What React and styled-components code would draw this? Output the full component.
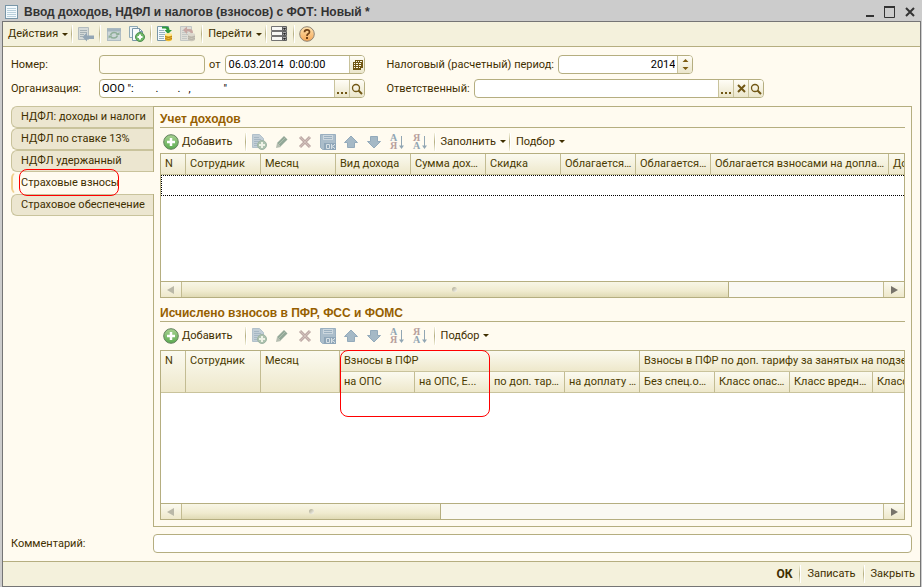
import React from 'react';
import styled, { createGlobalStyle, css } from 'styled-components';

const GlobalStyle = createGlobalStyle`
  * {
    box-sizing: border-box;
  }
  body {
    margin: 0;
    background: #cccccc;
  }
  body, button, input {
    color: #3f2f00;
    font-family: Roboto, "Liberation Sans", sans-serif;
    font-size: 11px;
    line-height: 16px;
  }
`;

// window
const Window = styled.div`
  display: flex;
  flex-direction: column;
  min-height: 100vh;
  padding: 0 1px 0 2px;
`;

const TitleBar = styled.header`
  display: flex;
  align-items: center;
  gap: 4px;
  height: 21px;
  padding: 2px 5px 0 2px;
`;

const WindowTitle = styled.h1`
  flex: 1;
  margin: 0;
  color: #333333;
  font-size: 12px;
  font-family: "Liberation Sans", sans-serif;
  font-weight: bold;
`;

const WindowButtons = styled.div`
  display: flex;
  gap: 8px;
`;

const PlainButton = styled.button`
  display: flex;
  align-items: center;
  justify-content: center;
  padding: 0;
  border: none;
  background: none;
`;

const Frame = styled.main`
  display: flex;
  flex: 1;
  flex-direction: column;
  border: 1px solid #757575;
  background: #fffbf0;
`;

// toolbars
const MainToolbar = styled.div`
  display: flex;
  align-items: center;
  height: 25px;
  padding-left: 1px;
  border-bottom: 1px solid #b5ae80;
  background: #f4f1dc;
`;

const Toolbar = styled.div`
  display: flex;
  align-items: center;
  height: 25px;
  padding: 2px 0 0 3px;
  ${props => props.$loose && css`margin-bottom: 3px;`}
`;

const IconButton = styled(PlainButton)`
  width: 23px;
  height: 20px;
`;

const TextButton = styled(PlainButton)`
  gap: 4px;
  height: 20px;
  padding: 0 1px 0 4px;
  white-space: nowrap;
`;

const AddButton = styled(TextButton)`
  gap: 3px;
  margin-right: 10px;
  padding: 0;
`;

const Caret = styled.span`
  border: 3px solid transparent;
  border-top-color: #3f2f00;
  border-bottom: none;
`;

const Separator = styled.span`
  width: 2px;
  height: 18px;
  margin: 0 1px 0 2px;
  border-right: 1px solid #ffffff;
  background: linear-gradient(#f4f1dc, #b5ae80, #f4f1dc);
`;

// header fields
const Form = styled.div`
  display: flex;
  gap: 21px;
  padding: 8px;
`;

const FormColumn = styled.div`
  display: flex;
  flex-direction: column;
  gap: 5px;
  ${props => props.$wide && css`width: 378px;`}
`;

const FormRow = styled.div`
  display: flex;
  align-items: center;
`;

const Label = styled.label`
  flex-shrink: 0;
  width: ${props => props.$width || 88}px;
  white-space: nowrap;
`;

const Middle = styled.label`
  padding: 0 5px 0 4px;
`;

const Field = styled.div`
  display: flex;
  flex: ${props => (props.$width ? 'none' : 1)};
  width: ${props => (props.$width ? `${props.$width}px` : 'auto')};
  height: 19px;
  overflow: hidden;
  border: 1px solid #b5ae80;
  border-radius: 4px;
  background: ${props => (props.$muted ? '#fffbf0' : '#ffffff')};
`;

const Input = styled.input`
  flex: 1;
  width: 0;
  min-width: 0;
  padding: 0 2px;
  border: none;
  outline: none;
  background: transparent;
  color: #000000;
  text-align: ${props => props.$align || 'left'};
`;

const FieldButton = styled(PlainButton)`
  width: 15px;
  border-left: 1px solid #c9c39c;
  background: linear-gradient(#fffdf6, #ebe6cb);
`;

// pages
const Pages = styled.div`
  display: flex;
  flex: 1;
  padding: 0 8px;
`;

const Tabs = styled.nav`
  width: 142px;
`;

const Tab = styled.button`
  position: relative;
  display: block;
  width: 142px;
  height: 22px;
  padding: 0 0 0 9px;
  border: 1px solid #c9c39c;
  border-right: none;
  border-radius: 6px 0 0 6px;
  background: #ece6d0;
  text-align: left;
  white-space: nowrap;
  ${props => props.$active && css`
    z-index: 1;
    width: 143px;
    border-color: transparent;
    border-left: 2px solid #f0cf8c;
    padding-left: 8px;
    background: #fffbf0;
  `}
`;

const Panel = styled.section`
  display: flex;
  flex: 1;
  flex-direction: column;
  gap: 8px;
  min-width: 0;
  padding: 5px 6px 6px;
  border: 1px solid #b5ae80;
`;

const Group = styled.section`
  display: flex;
  flex: ${props => (props.$grow ? 1 : 'none')};
  flex-direction: column;
`;

const GroupTitle = styled.h2`
  margin: 0;
  border-bottom: 1px solid #b5ae80;
  color: #965f00;
  font-size: 12px;
  font-family: "Liberation Sans", sans-serif;
  font-weight: bold;
  line-height: 15px;
`;

const Grid = styled.div`
  position: relative;
  display: flex;
  flex: 1;
  flex-direction: column;
  border: 1px solid #b5ae80;
  background: #ffffff;
`;

const GridBody = styled.div`
  flex: 1;
  min-height: 127px;
  overflow: hidden;
`;

const Table = styled.table`
  width: ${props => props.$width}px;
  border-collapse: separate;
  border-spacing: 0;
  table-layout: fixed;
`;

const HeadCell = styled.th`
  height: 21px;
  padding: 2px 2px 2px 4px;
  overflow: hidden;
  border-right: 1px solid #c3bc92;
  border-bottom: 1px solid #c9c39c;
  background: linear-gradient(#fbfaf0, #eee8cb);
  color: #4b3b00;
  font-weight: normal;
  text-align: left;
  text-overflow: ellipsis;
  vertical-align: top;
  white-space: nowrap;
`;

const CurrentCell = styled.td`
  height: 21px;
  padding: 0;
  border: 1px dotted #000000;
  border-right: none;
`;

const ScrollBar = styled.div`
  display: flex;
  height: 16px;
  border-top: 1px solid #b5ae80;
  background: #faf9f3;
`;

const ScrollButton = styled(PlainButton)`
  width: 21px;
  border-${props => props.$side}: 1px solid #c3bc92;
  background: linear-gradient(#fbfaf0, #eee8cb);
`;

const ScrollTrack = styled.div`
  flex: 1;
`;

const ScrollThumb = styled.div`
  display: flex;
  align-items: center;
  justify-content: center;
  width: ${props => props.$size}%;
  height: 15px;
  border-right: 1px solid #b5ae80;
  background: linear-gradient(#f8f6e6, #f0ebcf 60%, #e0dab4);
`;

const Grip = styled.span`
  width: 5px;
  height: 5px;
  border-radius: 3px;
  background: linear-gradient(135deg, #aaa68c, #faf9f3);
`;

const RedMark = styled.span`
  position: absolute;
  top: ${props => props.$top}px;
  left: ${props => props.$left}px;
  width: ${props => props.$width}px;
  height: ${props => props.$height}px;
  border: 1px solid #ff0000;
  border-radius: 8px;
  pointer-events: none;
`;

const CommentRow = styled.div`
  display: flex;
  align-items: center;
  padding: 7px 8px 8px;
`;

const Footer = styled.footer`
  display: flex;
  align-items: center;
  justify-content: flex-end;
  height: 25px;
  border-top: 1px solid #b5ae80;
  background: #f4f1dc;
`;

const FooterButton = styled(TextButton)`
  padding: 0 5px;
  ${props => props.$primary && css`
    font-size: 12px;
    font-weight: bold;
  `}
`;

// icons
const Svg = ({ w = 16, h = 16, children }) => (
  <svg width={w} height={h} viewBox={`0 0 ${w} ${h}`} aria-hidden="true">{children}</svg>
);

const DocumentIcon = () => (
  <Svg>
    <rect x="1.5" y="1.5" width="12" height="13" fill="#f4fafd" stroke="#7896a8" />
    <path d="M3 4.5h9M3 6.5h9M3 8.5h9M3 10.5h9M3 12.5h9" stroke="#b9d0dc" />
  </Svg>
);

const MoveIcon = () => (
  <Svg>
    <path d="M.5 1.5h10v12H.5z" fill="#d5dad8" stroke="#b3bcbe" />
    <path d="M2 4.5h7M2 6.5h7M2 8.5h4M2 10.5h3" stroke="#a5b0b4" />
    <path d="M4.5 11L9 6.5v3h7V13H9v2.5z" fill="#93a6b5" />
  </Svg>
);

const RefreshIcon = () => (
  <Svg>
    <rect x="1.5" y="2.5" width="13" height="12" fill="#ccd6d8" stroke="#b0bdc3" />
    <path d="M1 4h14" stroke="#a4b4bd" strokeWidth="3" />
    <path d="M4.5 9q1-2.5 3.5-2.5T11.5 8M11.5 9.5q-1 2.5-3.5 2.5T4.5 10.5" fill="none" stroke="#8fae98" strokeWidth="1.5" />
    <path d="M9.5 9h4V6zM6.5 9.5h-4v3z" fill="#8fae98" />
  </Svg>
);

const CopyIcon = () => (
  <Svg>
    <path d="M.5.5h8v11h-8z" fill="#eef4f5" stroke="#8ea9b5" />
    <path d="M3.5 2.5h7l3 3v9h-10z" fill="#f8fbfb" stroke="#7896a8" />
    <path d="M10.5 2.5v3h3" fill="none" stroke="#7896a8" />
    <circle cx="11" cy="11" r="4.5" fill="#6fb866" stroke="#4f8d50" />
    <path d="M11 8.5v5M8.5 11h5" stroke="#ffffff" strokeWidth="2" />
  </Svg>
);

const PostIcon = ({ muted }) => (
  <Svg>
    <g opacity={muted ? 0.75 : 1}>
      <path d="M.5.5h11v14H.5z" fill={muted ? '#d8d8d6' : '#f4fafd'} stroke={muted ? '#b3b9bd' : '#7896a8'} />
      <path d="M2 4.5h5M2 6.5h6M2 8.5h6M2 10.5h5M2 12.5h5" stroke={muted ? '#b3b9bd' : '#9ab3c0'} />
      {muted
        ? <path d="M3 4l4-3.5V3h3q3 0 3 4h-2.5q0-1.5-1.5-1.5H7V8z" fill="#b88f8f" />
        : <path d="M5 .5h4Q12.500.5 12.500 4H15l-4 4-3.500-4h2q0-1.500-1-1.500H5z" fill="#2f9a3d" />}
      <path d="M8 8.5V14q3.500 2.500 7 0V8.500z" fill={muted ? '#bdb8ae' : '#f0bd32'} />
      <ellipse cx="11.5" cy="8.5" rx="3.5" ry="1.5" fill={muted ? '#d4d0c8' : '#ffe78a'} />
      <path d="M8 10.5q3.500 2 7 0M8 12.5q3.500 2 7 0" fill="none" stroke={muted ? '#9d9a93' : '#b57b14'} />
    </g>
  </Svg>
);

const ListIcon = () => (
  <Svg>
    {[0, 5, 10].map(y => (
      <g key={y}>
        <path d={`M.5 ${y + 0.5}h11v4H.5z`} fill="#f7f7f4" stroke="#737373" />
        <path d={`M11.5 ${y + 0.5}h4v4h-4z`} fill="#a5a5a5" stroke="#606060" />
        <path d={`M12 ${y + 2}h3l-1.5 2z`} fill="#222222" />
      </g>
    ))}
  </Svg>
);

const HelpIcon = () => (
  <Svg>
    <defs>
      <linearGradient id="help" x2="0" y2="1">
        <stop stopColor="#ffe4b0" />
        <stop offset="1" stopColor="#f5a655" />
      </linearGradient>
    </defs>
    <circle cx="8" cy="8" r="7.3" fill="url(#help)" stroke="#8f8475" />
    <path d="M5.5 6.2q0-2.4 2.5-2.4t2.5 2.2Q10.5 7.3 9 8.1q-1 .6-1 1.9" fill="none" stroke="#714116" strokeWidth="1.7" />
    <rect x="7" y="11" width="2" height="2" fill="#714116" />
  </Svg>
);

const AddIcon = () => (
  <Svg>
    <defs>
      <linearGradient id="add" x2="0" y2="1">
        <stop stopColor="#a8d292" />
        <stop offset="1" stopColor="#5bab50" />
      </linearGradient>
    </defs>
    <circle cx="8" cy="8" r="7.3" fill="url(#add)" stroke="#63805e" />
    <path d="M8 4v8M4 8h8" stroke="#ffffff" strokeWidth="2.5" />
  </Svg>
);

const AddCopyIcon = () => (
  <Svg>
    <path d="M1.5.5h7l4 4v9h-11z" fill="#c2ced6" stroke="#b2c1cb" />
    <path d="M3 3.5h5M3 5.5h7M3 7.5h5M3 9.5h3M3 11.500h3" stroke="#a6b7c3" />
    <circle cx="11" cy="11" r="4.5" fill="#acc2ae" stroke="#9eb3a3" />
    <path d="M11 8v6M8 11h6" stroke="#eef2e6" strokeWidth="2" />
  </Svg>
);

const PencilIcon = () => (
  <Svg>
    <path d="M2 14l1-5 4 4z" fill="#b5bdb0" />
    <path d="M3 9l7-7 3.500 3.500-7 7z" fill="#93a898" />
    <path d="M5 10l6-6" stroke="#afc0af" />
  </Svg>
);

const DeleteIcon = () => (
  <Svg>
    <path d="M3 3l10 10M13 3L3 13" stroke="#beaaa6" strokeWidth="3" />
    <path d="M3 3l10 10M13 3L3 13" stroke="#d0bfba" />
  </Svg>
);

const SaveIcon = () => (
  <Svg>
    <path d="M.5.5h15v15H2.5l-2-2z" fill="#abbdca" stroke="#9bb0c0" />
    <rect x="3" y="1" width="10" height="5" fill="#ccd7de" />
    <path d="M4 2.5h8M4 4.5h8" stroke="#9bb0c0" />
    <rect x="4" y="9" width="12" height="7" fill="#8fa6b8" />
    <path d="M6.5 10.5h3v4h-3zM11.5 10v5M14.5 10v1l-3 1.5 3 1.5v1" fill="none" stroke="#d7e0e5" />
  </Svg>
);

const ArrowIcon = ({ down }) => (
  <Svg>
    <path
      d="M8 2l6.500 6.500h-3v5h-7v-5h-3z"
      fill="#a5b9c6"
      stroke="#93aabb"
      transform={down ? 'rotate(180 8 8)' : undefined}
    />
  </Svg>
);

const SortButton = styled(IconButton)`
  gap: 2px;
`;

const SortLetters = styled.span`
  display: flex;
  flex-direction: column;
  color: ${props => props.$color};
  font-size: 10px;
  font-family: "Liberation Serif", serif;
  font-weight: bold;
  line-height: 8px;
`;

const SortSecond = styled.span`
  color: ${props => props.$color};
`;

const SortIcon = ({ desc }) => (
  <>
    <SortLetters $color={desc ? '#b8a09d' : '#91a6b3'}>
      {desc ? 'Я' : 'А'}
      <SortSecond $color={desc ? '#91a6b3' : '#b8a09d'}>{desc ? 'А' : 'Я'}</SortSecond>
    </SortLetters>
    <Svg w={5} h={16}>
      <path d="M2.5 2v11" stroke="#91a6b3" />
      <path d="M0 11.500h5l-2.500 3.500z" fill="#91a6b3" />
    </Svg>
  </>
);

const CalendarIcon = () => (
  <Svg w={11} h={12}>
    <path d="M3 1h8v8H9v2H1V3h2z" fill="#715715" />
    <path d="M4 2h1v1H4zM6 2h1v1H6zM8 2h2v1H8zM2 4h1v1H2zM4 4h2v1H4zM7 4h2v1H7zM2 6h1v1H2zM4 6h2v1H4zM7 6h2v1H7zM2 8h1v1H2zM4 8h2v1H4zM7 8h1v1H7z" fill="#fffbe8" />
  </Svg>
);

const DotsIcon = () => (
  <Svg w={11} h={12}>
    <path d="M0 9h2v2H0zM4 9h2v2H4zM8 9h2v2H8z" fill="#715715" />
  </Svg>
);

const ClearIcon = () => (
  <Svg w={9} h={9}>
    <path d="M1 1l7 7M8 1L1 8" stroke="#715715" strokeWidth="2" />
  </Svg>
);

const SearchIcon = () => (
  <Svg w={12} h={12}>
    <circle cx="5" cy="5" r="3.5" fill="none" stroke="#715715" strokeWidth="1.3" />
    <path d="M7.5 7.5L11 11" stroke="#715715" strokeWidth="2" />
  </Svg>
);

const SpinIcon = () => (
  <Svg w={7} h={13}>
    <path d="M3.5 1l3 3h-6zM3.5 12l3-3h-6z" fill="#7d5c10" />
  </Svg>
);

const TriangleIcon = ({ right }) => (
  <Svg w={8} h={8}>
    <path d={right ? 'M1 0l7 4-7 4z' : 'M7 0L0 4l7 4z'} fill={right ? '#77736a' : '#bab8a8'} />
  </Svg>
);

const tabs = [
  'НДФЛ: доходы и налоги',
  'НДФЛ по ставке 13%',
  'НДФЛ удержанный',
  'Страховые взносы',
  'Страховое обеспечение',
];

const incomeColumns = [
  { title: 'N', width: 25 },
  { title: 'Сотрудник', width: 75 },
  { title: 'Месяц', width: 75 },
  { title: 'Вид дохода', width: 75 },
  { title: 'Сумма дохода', width: 75 },
  { title: 'Скидка', width: 75 },
  { title: 'Облагается взносами', width: 75 },
  { title: 'Облагается взносами', width: 75 },
  { title: 'Облагается взносами на доплату', width: 178 },
  { title: 'Доход', width: 75 },
];

const feeWidths = [25, 75, 79, 75, 75, 75, 75, 75, 75, 83, 75];
const feeColumns = [
  'на ОПС',
  'на ОПС, Е...',
  'по доп. тарифу',
  'на доплату к пенсии',
  'Без спец.оценки',
  'Класс опасный',
  'Класс вредный',
  'Класс вредный',
];

const sum = list => list.reduce((total, n) => total + n, 0);

const TableToolbar = ({ menus, loose }) => (
  <Toolbar $loose={loose}>
    <AddButton><AddIcon /><span><u>Д</u>обавить</span></AddButton>
    <Separator />
    <IconButton aria-label="Скопировать"><AddCopyIcon /></IconButton>
    <IconButton aria-label="Изменить"><PencilIcon /></IconButton>
    <IconButton aria-label="Удалить"><DeleteIcon /></IconButton>
    <IconButton aria-label="Сохранить"><SaveIcon /></IconButton>
    <IconButton aria-label="Вверх"><ArrowIcon /></IconButton>
    <IconButton aria-label="Вниз"><ArrowIcon down /></IconButton>
    <SortButton aria-label="По возрастанию"><SortIcon /></SortButton>
    <SortButton aria-label="По убыванию"><SortIcon desc /></SortButton>
    {menus.map(menu => (
      <React.Fragment key={menu}>
        <Separator />
        <TextButton>{menu}<Caret /></TextButton>
      </React.Fragment>
    ))}
  </Toolbar>
);

const HorizontalScroll = ({ size }) => (
  <ScrollBar>
    <ScrollButton $side="right" aria-label="Влево"><TriangleIcon /></ScrollButton>
    <ScrollTrack><ScrollThumb $size={size}><Grip /></ScrollThumb></ScrollTrack>
    <ScrollButton $side="left" aria-label="Вправо"><TriangleIcon right /></ScrollButton>
  </ScrollBar>
);

const IncomeTable = () => (
  <Grid>
    <GridBody>
      <Table $width={sum(incomeColumns.map(c => c.width))}>
        <colgroup>
          {incomeColumns.map((c, idx) => <col key={idx} width={c.width} />)}
        </colgroup>
        <thead>
          <tr>{incomeColumns.map((c, idx) => <HeadCell key={idx}>{c.title}</HeadCell>)}</tr>
        </thead>
        <tbody>
          <tr><CurrentCell colSpan={incomeColumns.length} /></tr>
        </tbody>
      </Table>
    </GridBody>
    <HorizontalScroll size={78} />
  </Grid>
);

const FeesTable = () => (
  <Grid>
    <GridBody>
      <Table $width={sum(feeWidths)}>
        <colgroup>
          {feeWidths.map((width, idx) => <col key={idx} width={width} />)}
        </colgroup>
        <thead>
          <tr>
            <HeadCell rowSpan={2}>N</HeadCell>
            <HeadCell rowSpan={2}>Сотрудник</HeadCell>
            <HeadCell rowSpan={2}>Месяц</HeadCell>
            <HeadCell colSpan={4}>Взносы в ПФР</HeadCell>
            <HeadCell colSpan={4}>Взносы в ПФР по доп. тарифу за занятых на подземных работах</HeadCell>
          </tr>
          <tr>{feeColumns.map((title, idx) => <HeadCell key={idx}>{title}</HeadCell>)}</tr>
        </thead>
      </Table>
    </GridBody>
    <HorizontalScroll size={37} />
    <RedMark $top={-1} $left={179} $width={150} $height={67} />
  </Grid>
);

const App = () => (
  <Window>
    <GlobalStyle />
    <TitleBar>
      <DocumentIcon />
      <WindowTitle>Ввод доходов, НДФЛ и налогов (взносов) с ФОТ: Новый *</WindowTitle>
      <WindowButtons>
        <PlainButton aria-label="Свернуть">
          <Svg w={12} h={12}><path d="M2 10h8" stroke="#333333" strokeWidth="2" /></Svg>
        </PlainButton>
        <PlainButton aria-label="Развернуть">
          <Svg w={12} h={12}>
            <path d="M.5 1v10.5h10V1" fill="none" stroke="#333333" />
            <path d="M0 1h11" stroke="#333333" strokeWidth="2" />
          </Svg>
        </PlainButton>
        <PlainButton aria-label="Закрыть окно">
          <Svg w={12} h={12}><path d="M2 2l8 8M10 2l-8 8" stroke="#333333" strokeWidth="2" /></Svg>
        </PlainButton>
      </WindowButtons>
    </TitleBar>
    <Frame>
      <MainToolbar>
        <TextButton>Действия<Caret /></TextButton>
        <Separator />
        <IconButton aria-label="Перейти к списку"><MoveIcon /></IconButton>
        <Separator />
        <IconButton aria-label="Обновить"><RefreshIcon /></IconButton>
        <IconButton aria-label="Скопировать документ"><CopyIcon /></IconButton>
        <Separator />
        <IconButton aria-label="Провести"><PostIcon /></IconButton>
        <IconButton aria-label="Отменить проведение"><PostIcon muted /></IconButton>
        <Separator />
        <TextButton>Перейти<Caret /></TextButton>
        <Separator />
        <IconButton aria-label="Настройки"><ListIcon /></IconButton>
        <Separator />
        <IconButton aria-label="Справка"><HelpIcon /></IconButton>
      </MainToolbar>

      <Form>
        <FormColumn>
          <FormRow>
            <Label htmlFor="number">Номер:</Label>
            <Field $width={106} $muted><Input id="number" /></Field>
            <Middle htmlFor="date">от</Middle>
            <Field $width={140}>
              <Input id="date" defaultValue="06.03.2014  0:00:00" />
              <FieldButton aria-label="Календарь"><CalendarIcon /></FieldButton>
            </Field>
          </FormRow>
          <FormRow>
            <Label htmlFor="company">Организация:</Label>
            <Field>
              <Input id="company" defaultValue={'ООО ":        .       .   ,            "'} />
              <FieldButton aria-label="Выбрать организацию"><DotsIcon /></FieldButton>
              <FieldButton aria-label="Открыть организацию"><SearchIcon /></FieldButton>
            </Field>
          </FormRow>
        </FormColumn>
        <FormColumn $wide>
          <FormRow>
            <Label htmlFor="period" $width={172}>Налоговый (расчетный) период:</Label>
            <Field $width={135}>
              <Input id="period" defaultValue="2014" $align="right" />
              <FieldButton aria-label="Изменить период"><SpinIcon /></FieldButton>
            </Field>
          </FormRow>
          <FormRow>
            <Label htmlFor="person">Ответственный:</Label>
            <Field>
              <Input id="person" />
              <FieldButton aria-label="Выбрать ответственного"><DotsIcon /></FieldButton>
              <FieldButton aria-label="Очистить"><ClearIcon /></FieldButton>
              <FieldButton aria-label="Открыть ответственного"><SearchIcon /></FieldButton>
            </Field>
          </FormRow>
        </FormColumn>
      </Form>

      <Pages>
        <Tabs>
          {tabs.map((tab, idx) => (
            <Tab key={tab} $active={idx === 3}>
              {tab}
              {idx === 3 && <RedMark $top={-4} $left={6} $width={100} $height={27} />}
            </Tab>
          ))}
        </Tabs>
        <Panel>
          <Group>
            <GroupTitle>Учет доходов</GroupTitle>
            <TableToolbar menus={['Заполнить', 'Подбор']} />
            <IncomeTable />
          </Group>
          <Group $grow>
            <GroupTitle>Исчислено взносов в ПФР, ФСС и ФОМС</GroupTitle>
            <TableToolbar menus={['Подбор']} loose />
            <FeesTable />
          </Group>
        </Panel>
      </Pages>

      <CommentRow>
        <Label htmlFor="comment" $width={142}>Комментарий:</Label>
        <Field><Input id="comment" /></Field>
      </CommentRow>

      <Footer>
        <FooterButton $primary>ОК</FooterButton>
        <Separator />
        <FooterButton>Записать</FooterButton>
        <Separator />
        <FooterButton>Закрыть</FooterButton>
      </Footer>
    </Frame>
  </Window>
);

export default App;
